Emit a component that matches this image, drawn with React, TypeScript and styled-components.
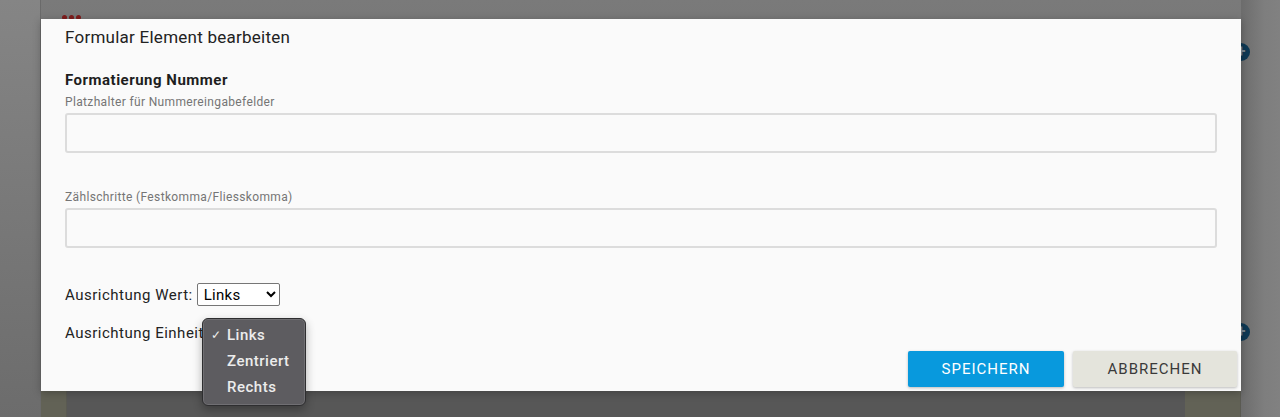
import React from 'react';
import styled, { createGlobalStyle } from 'styled-components';

const GlobalStyle = createGlobalStyle`
  html, body {
    margin: 0;
    padding: 0;
    overflow: hidden;
  }
  body {
    font-family: Roboto, "Liberation Sans", Arial, sans-serif;
  }
`;

const alignOptions = ['Links', 'Zentriert', 'Rechts'];

const App = () => {
  return (
    <>
      <GlobalStyle />
      <St.Page>
        <St.SideColumn />
        <St.MainColumn>
          <St.Dots>
            <St.Dot />
            <St.Dot />
            <St.Dot />
          </St.Dots>
          <St.PlusButton $top={23}>+</St.PlusButton>
          <St.PlusButton $top={262}>+</St.PlusButton>
          <St.CardFoot>
            <St.CardStrip $width={25} />
            <St.CardBody />
            <St.CardStrip $width={55} />
          </St.CardFoot>
        </St.MainColumn>
        <St.RightColumn />

        <St.Dialog>
          <St.DialogTitle>Formular Element bearbeiten</St.DialogTitle>
          <St.SectionTitle>Formatierung Nummer</St.SectionTitle>

          <St.FieldLabel>Platzhalter für Nummereingabefelder</St.FieldLabel>
          <St.TextField type="text" />

          <St.FieldLabel $gap={37}>Zählschritte (Festkomma/Fliesskomma)</St.FieldLabel>
          <St.TextField type="text" />

          <St.SelectRow $gap={35}>
            Ausrichtung Wert:
            <St.Select defaultValue="Links">
              {alignOptions.map((opt) => (
                <option key={opt}>{opt}</option>
              ))}
            </St.Select>
          </St.SelectRow>
          <St.SelectRow $gap={15}>
            Ausrichtung Einheit:
            <St.Select defaultValue="Links">
              {alignOptions.map((opt) => (
                <option key={opt}>{opt}</option>
              ))}
            </St.Select>
          </St.SelectRow>

          <St.Footer>
            <St.Button $primary>Speichern</St.Button>
            <St.Button>Abbrechen</St.Button>
          </St.Footer>

          {/* geöffnetes natives Dropdown */}
          <St.Menu>
            {alignOptions.map((opt, i) => (
              <St.MenuItem key={opt}>
                <St.Check>{i === 0 ? '✓' : ''}</St.Check>
                {opt}
              </St.MenuItem>
            ))}
          </St.Menu>
        </St.Dialog>
      </St.Page>
    </>
  );
};

export default App;

const St = {
  Page: styled.div`
    position: relative;
    width: 1280px;
    height: 417px;
    display: grid;
    grid-template-columns: 41px 1200px 1fr;
    overflow: hidden;
  `,

  SideColumn: styled.div`
    background: linear-gradient(180deg, #858585 0%, #6c6c6c 100%);
    border-right: 1px solid #6a6a6a;
  `,

  MainColumn: styled.div`
    position: relative;
    display: flex;
    flex-direction: column;
    background: linear-gradient(180deg, #7a7a7a 0%, #666 70%, #575757 100%);
  `,

  RightColumn: styled.div`
    background: linear-gradient(90deg, #6c6c6c 0%, #7e7e7e 60%, #818181 100%);
  `,

  Dots: styled.div`
    display: flex;
    gap: 2px;
    margin: 15px 0 0 21px;
  `,

  Dot: styled.span`
    width: 5px;
    height: 5px;
    border-radius: 50%;
    background: #7e1c1c;
  `,

  PlusButton: styled.div<{ $top: number }>`
    align-self: flex-end;
    margin: ${({ $top }) => $top}px -9px 0 0;
    width: 18px;
    height: 18px;
    border-radius: 50%;
    background: #0e3954;
    color: #7a8a95;
    font: 700 16px/18px Roboto, sans-serif;
    text-align: center;
  `,

  CardFoot: styled.div`
    margin-top: auto;
    height: 26px;
    display: flex;
  `,

  CardStrip: styled.div<{ $width: number }>`
    width: ${({ $width }) => $width}px;
    background: #626256;
    border-right: 1px solid #5a5a52;
  `,

  CardBody: styled.div`
    flex: 1;
    background: #575757;
  `,

  Dialog: styled.div`
    position: absolute;
    left: 41px;
    top: 19px;
    width: 1200px;
    height: 372px;
    box-sizing: border-box;
    padding: 0 24px;
    background: #fafafa;
    display: flex;
    flex-direction: column;
    box-shadow: 0 2px 8px rgba(0, 0, 0, 0.25);
  `,

  DialogTitle: styled.div`
    margin-top: 8px;
    font-size: 17px;
    line-height: 20px;
    letter-spacing: 0.25px;
    color: #222;
  `,

  SectionTitle: styled.div`
    margin-top: 24px;
    font-size: 15px;
    line-height: 18px;
    font-weight: 700;
    letter-spacing: 0.5px;
    color: #1e1e1e;
  `,

  FieldLabel: styled.label<{ $gap?: number }>`
    display: block;
    margin-top: ${({ $gap }) => $gap ?? 6}px;
    font-size: 12px;
    line-height: 14px;
    letter-spacing: 0.35px;
    color: #757575;
  `,

  TextField: styled.input`
    margin-top: 4px;
    box-sizing: border-box;
    width: 100%;
    height: 40px;
    border: 2px solid #dcdcdc;
    border-radius: 3px;
    background: #fafafa;
    outline: none;
  `,

  SelectRow: styled.div<{ $gap: number }>`
    margin-top: ${({ $gap }) => $gap}px;
    display: flex;
    align-items: center;
    gap: 4px;
    height: 23px;
    font-size: 15px;
    letter-spacing: 0.5px;
    color: #222;
  `,

  Select: styled.select`
    width: 83px;
    height: 23px;
    font-family: Roboto, "Liberation Sans", sans-serif;
    font-size: 15px;
    letter-spacing: 0.3px;
    color: #000;
    background: #fff;
    border: 1px solid #767676;
    border-radius: 2px;
    padding: 0 2px;
  `,

  Footer: styled.div`
    margin: auto -20px 4px 0;
    display: flex;
    justify-content: flex-end;
    gap: 9px;
  `,

  Button: styled.button<{ $primary?: boolean }>`
    height: 36px;
    width: ${({ $primary }) => ($primary ? 156 : 164)}px;
    border: none;
    border-radius: 2px;
    font-family: Roboto, "Liberation Sans", sans-serif;
    font-size: 15px;
    letter-spacing: 1px;
    text-transform: uppercase;
    color: ${({ $primary }) => ($primary ? '#fff' : '#3a3a3a')};
    background: ${({ $primary }) => ($primary ? '#0899dd' : '#e4e4dc')};
    box-shadow: 0 1px 3px rgba(0, 0, 0, 0.25);
  `,

  Menu: styled.div`
    position: absolute;
    left: 161px;
    top: 299px;
    width: 104px;
    height: 88px;
    box-sizing: border-box;
    padding-top: 3px;
    background: #5d5c60;
    border: 1px solid #2e2e30;
    border-radius: 6px;
    box-shadow: 0 0 0 1px rgba(255, 255, 255, 0.12) inset, 0 4px 10px rgba(0, 0, 0, 0.3);
  `,

  MenuItem: styled.div`
    display: flex;
    align-items: center;
    height: 26px;
    padding-left: 8px;
    font-size: 15px;
    font-weight: 500;
    letter-spacing: 0.5px;
    color: #ececec;
  `,

  Check: styled.span`
    width: 16px;
    font-size: 12px;
    color: #ececec;
  `,
};
